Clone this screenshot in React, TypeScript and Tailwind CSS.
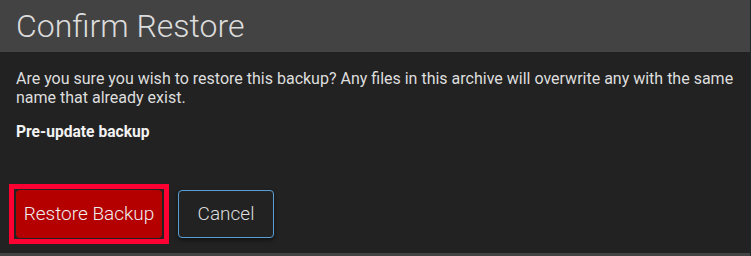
export default function App() {
  return (
    <div className="w-[751px] h-[256px] overflow-hidden flex bg-[#1f2a2c]" style={{ fontFamily: "Roboto, 'Liberation Sans', sans-serif" }}>
      <div className="w-[750px] h-full flex flex-col bg-[#222222]">
        <div className="h-[52px] bg-[#434343] px-4 flex items-center">
          <h1 className="text-[32px] font-light text-[#dcdcdc] leading-none">Confirm Restore</h1>
        </div>
        <div className="px-4 pt-[17px] text-[16px] leading-[19px] text-[#dedede]">
          <p>Are you sure you wish to restore this backup? Any files in this archive will overwrite any with the same name that already exist.</p>
          <p className="mt-[16px] text-[15.6px] font-bold text-[#f2f2f2]">Pre-update backup</p>
        </div>
        <div className="flex items-center gap-[9px] pl-[9px] mt-[42px]">
          <div className="border-[5px] border-[#ff0033] px-[2px] py-[1px]">
            <button className="h-[48px] w-[146px] rounded-[4px] bg-[#b50000] text-[19px] font-light text-[#eeeeee] flex items-center justify-center">Restore Backup</button>
          </div>
          <button className="h-[48px] w-[96px] rounded-[4px] border border-[#5b9ed6] text-[19px] font-light text-[#dddddd] shadow-[0_2px_4px_rgba(0,0,0,0.5)] flex items-center justify-center">Cancel</button>
        </div>
        <div className="flex-1" />
        <div className="h-[3px] bg-[#434343]" />
      </div>
    </div>
  );
}
